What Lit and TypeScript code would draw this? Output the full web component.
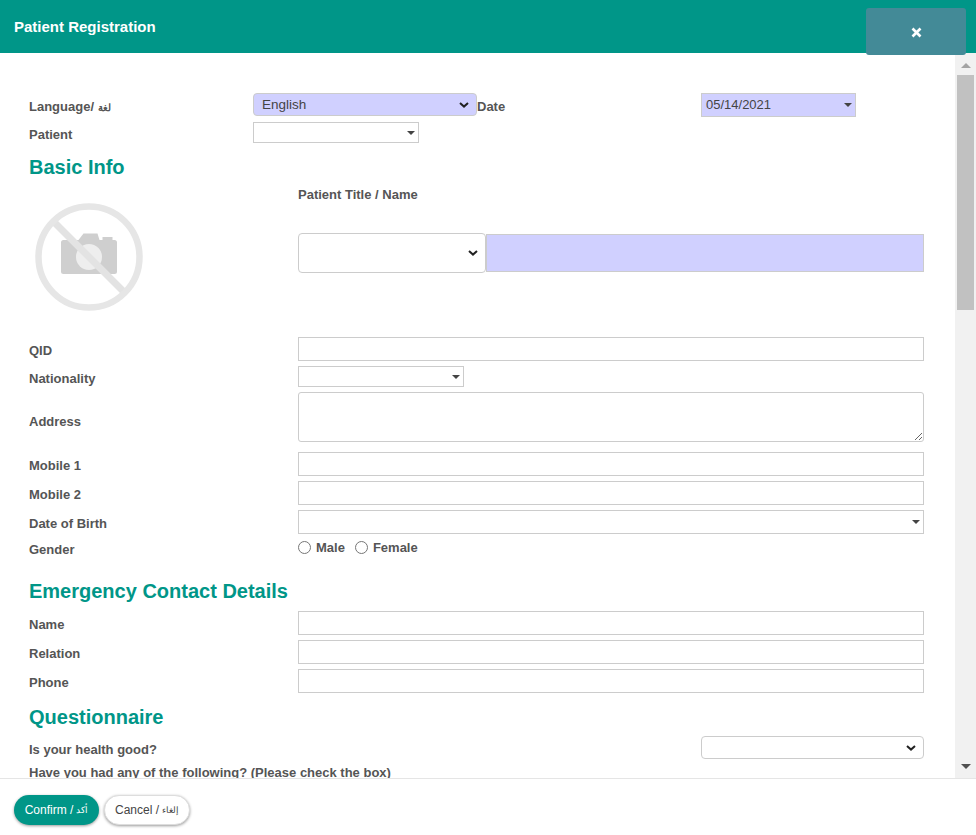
import { LitElement, html, css } from "lit";
import { customElement } from "lit/decorators.js";

@customElement("app-root")
export class AppRoot extends LitElement {
  static styles = css`
    :host {
      display: flex;
      flex-direction: column;
      width: 976px;
      height: 835px;
      overflow: hidden;
      position: relative;
      background: #fff;
      font-family: "Liberation Sans", Arial, "Noto Sans", sans-serif;
      font-size: 13px;
      color: #555;
    }
    .header {
      flex: none;
      height: 53px;
      background: #009688;
      color: #fff;
      font-size: 15px;
      font-weight: 700;
      line-height: 54px;
      padding-left: 14px;
    }
    .close {
      position: absolute;
      left: 866px;
      top: 8px;
      width: 100px;
      height: 47px;
      box-sizing: border-box;
      padding-top: 1px;
      border-radius: 3px;
      background: #438a97;
      display: flex;
      align-items: center;
      justify-content: center;
      z-index: 2;
    }
    .main {
      flex: 1;
      min-height: 0;
      display: flex;
    }
    .form {
      flex: 1;
      min-width: 0;
      overflow: hidden;
      padding: 40px 31px 0 29px;
    }
    .scrollbar {
      flex: none;
      width: 21px;
      background: #f1f1f1;
      display: flex;
      flex-direction: column;
      align-items: center;
      padding-top: 22px;
      position: relative;
    }
    .thumb {
      width: 17px;
      height: 235px;
      background: #c1c1c1;
    }
    .arrow-up, .arrow-down {
      position: absolute;
      left: 6px;
      width: 0;
      height: 0;
      border-left: 5px solid transparent;
      border-right: 5px solid transparent;
    }
    .arrow-up { top: 10px; border-bottom: 5px solid #a3a3a3; }
    .arrow-down { bottom: 9px; border-top: 5px solid #505050; }
    .footer {
      flex: none;
      height: 40px;
      border-top: 1px solid #e5e5e5;
      display: flex;
      gap: 5px;
      padding: 16px 0 0 14px;
    }
    .btn {
      height: 30px;
      box-sizing: border-box;
      border-radius: 15px;
      font-size: 12px;
      display: flex;
      align-items: center;
      justify-content: center;
      gap: 3px;
      box-shadow: 0 1px 3px rgba(0, 0, 0, 0.4);
    }
    .btn .ar { font-size: 9px; }
    .confirm { width: 85px; background: #009688; color: #fff; }
    .cancel { width: 86px; background: #fff; color: #444; border: 1px solid #ddd; }
    .ar { font-size: 10px; }

    .top-row {
      display: grid;
      grid-template-columns: 224px 224px 224px 155px;
      align-items: start;
      height: 24px;
    }
    .top-row .lbl { line-height: 28px; }
    .row {
      display: grid;
      grid-template-columns: 269px 626px;
      align-items: center;
      margin-top: 5px;
    }
    .row.patient { grid-template-columns: 224px 166px; }
    .lbl { font-weight: 700; font-size: 13px; }
    .row .lbl { padding-top: 2px; }
    .row .lbl.short-lbl { padding-top: 4px; }
    .row .lbl.plain { padding-top: 0; }
    .row .lbl.addr { padding-top: 8px; }
    .control {
      box-sizing: border-box;
      border: 1px solid #ccc;
      background: #fff;
      height: 24px;
      display: block;
      width: 100%;
      margin: 0;
      padding: 0 4px;
      font-family: inherit;
      font-size: 12px;
      border-radius: 0;
      outline: none;
      color: #444;
    }
    textarea.control { height: 50px; border-radius: 3px; }
    select.native {
      border-radius: 4px;
      appearance: none;
      background-image: url("data:image/svg+xml,%3Csvg xmlns='http://www.w3.org/2000/svg' width='10' height='6'%3E%3Cpath d='M1 1L5 4.6L9 1' fill='none' stroke='%23222' stroke-width='2'/%3E%3C/svg%3E");
      background-repeat: no-repeat;
      background-position: right 7px center;
    }
    .fill { background-color: #d0d0ff; }
    .caret {
      position: relative;
      display: flex;
      align-items: center;
      line-height: 1;
    }
    .caret::after {
      content: "";
      position: absolute;
      right: 3px;
      top: 50%;
      margin-top: -2px;
      border-left: 4px solid transparent;
      border-right: 4px solid transparent;
      border-top: 4px solid #444;
    }
    .lang { height: 23px; padding: 0 8px 0; font-size: 13.5px; }
    .date { font-size: 13px; padding-bottom: 2px; }
    .short { height: 21px; width: 166px; }
    h2 {
      margin: 0;
      color: #009688;
      font-size: 20px;
      line-height: 24px;
      font-weight: 700;
    }
    .h-basic { margin-top: 12px; }
    .h-emerg { margin-top: 20px; }
    .h-quest { margin-top: 12px; }
    .subhead { margin: 7px 0 0 269px; height: 16px; line-height: 18px; }
    .photo-row {
      display: grid;
      grid-template-columns: 269px 188px 438px;
      height: 135px;
      align-items: start;
    }
    .photo { display: block; margin: 0 0 0 5px; }
    .title-sel { height: 40px; margin-top: 31px; }
    .name-in { height: 38px; margin-top: 32px; }
    .gender-row { margin-top: 6px; height: 19px; }
    .radios {
      display: flex;
      align-items: center;
      gap: 10px;
      font-weight: 700;
      font-size: 13px;
      position: relative;
      top: -2px;
    }
    .radios label { display: flex; align-items: center; gap: 5px; }
    .radios input { margin: 0; width: 13px; height: 13px; }
    .quest-row {
      display: grid;
      grid-template-columns: 672px 223px;
      align-items: center;
      margin-top: 7px;
    }
    .quest-row .lbl { padding-top: 3px; }
    .quest-row select { height: 23px; }
    .have { margin-top: 6px; line-height: 16px; white-space: nowrap; }
    .m-10 { margin-top: 10px; }
    .mt-8 { margin-top: 8px; }
    .mt-0 { margin-top: 0; }
  `;

  private textRow(label: string, cls = "") {
    return html`<div class="row ${cls}">
      <span class="lbl">${label}</span><input class="control" />
    </div>`;
  }

  render() {
    return html`
      <div class="header">Patient Registration</div>
      <div class="close">
        <svg width="11" height="11" viewBox="0 0 11 11">
          <path d="M1.5 1.5L9.5 9.5M9.5 1.5L1.5 9.5" stroke="#fff" stroke-width="2.6" fill="none" />
        </svg>
      </div>
      <div class="main">
        <div class="form">
          <div class="top-row">
            <span class="lbl">Language/ <span class="ar">لغة</span></span>
            <select class="control native fill lang"><option>English</option></select>
            <span class="lbl">Date</span>
            <div class="control fill caret date">05/14/2021</div>
          </div>
          <div class="row patient">
            <span class="lbl short-lbl">Patient</span>
            <div class="control caret short"></div>
          </div>
          <h2 class="h-basic">Basic Info</h2>
          <div class="lbl subhead">Patient Title / Name</div>
          <div class="photo-row">
            <svg class="photo" width="110" height="110" viewBox="0 0 110 110">
              <path
                d="M27 40.500a2.500 2.500 0 0 1 2.500-2.500h15l5-6.500h14l2 6.500h3v-3h10v3h2a2.500 2.500 0 0 1 2.500 2.500v29a2.500 2.500 0 0 1-2.500 2.500H29.500a2.500 2.500 0 0 1-2.500-2.500z"
                fill="#cfcfcf"
              />
              <circle cx="55" cy="55" r="13" fill="#eeeeee" />
              <line x1="21" y1="21" x2="89" y2="89" stroke="#e3e3e3" stroke-width="7" />
              <circle cx="55" cy="55" r="50.500" fill="none" stroke="#e6e6e6" stroke-width="6.500" />
            </svg>
            <select class="control native title-sel"><option></option></select>
            <input class="control fill name-in" />
          </div>
          <div class="row mt-0">
            <span class="lbl">QID</span><input class="control" />
          </div>
          <div class="row">
            <span class="lbl short-lbl">Nationality</span>
            <div class="control caret short"></div>
          </div>
          <div class="row">
            <span class="lbl addr">Address</span><textarea class="control"></textarea>
          </div>
          ${this.textRow("Mobile 1", "m-10")}
          ${this.textRow("Mobile 2")}
          <div class="row">
            <span class="lbl">Date of Birth</span>
            <div class="control caret"></div>
          </div>
          <div class="row gender-row">
            <span class="lbl plain">Gender</span>
            <div class="radios">
              <label><input type="radio" name="g" />Male</label>
              <label><input type="radio" name="g" />Female</label>
            </div>
          </div>
          <h2 class="h-emerg">Emergency Contact Details</h2>
          ${this.textRow("Name", "mt-8")}
          ${this.textRow("Relation")}
          ${this.textRow("Phone")}
          <h2 class="h-quest">Questionnaire</h2>
          <div class="quest-row">
            <span class="lbl">Is your health good?</span>
            <select class="control native"><option></option></select>
          </div>
          <div class="lbl have">Have you had any of the following? (Please check the box)</div>
        </div>
        <div class="scrollbar">
          <div class="arrow-up"></div>
          <div class="thumb"></div>
          <div class="arrow-down"></div>
        </div>
      </div>
      <div class="footer">
        <div class="btn confirm"><span>Confirm /</span><span class="ar">أكد</span></div>
        <div class="btn cancel"><span>Cancel /</span><span class="ar">إلغاء</span></div>
      </div>
    `;
  }
}
